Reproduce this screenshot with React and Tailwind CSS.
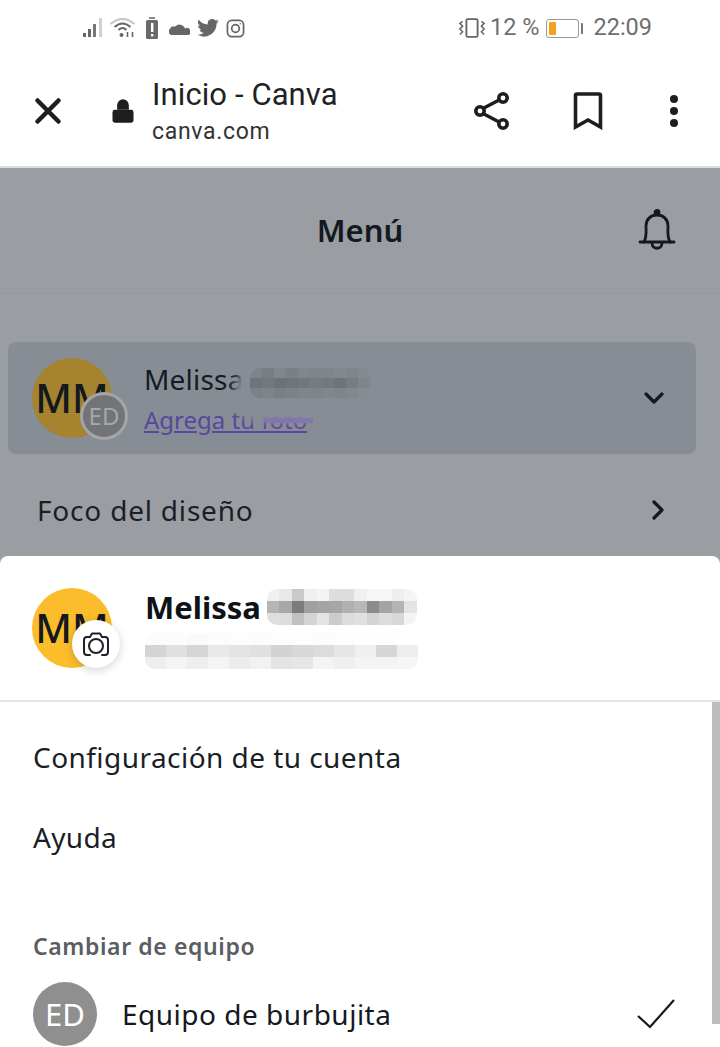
import React from 'react';
import { X, Lock, ChevronDown, ChevronRight } from 'lucide-react';

// pixelated patches that hide the surname and email
const nameCells = [
  ['#f0f0f0', '#e8e8e8', '#c9c9c9', '#f0f0f0', '#f4f4f4', '#dddddd', '#dddddd', '#f0f0f0', '#f6f6f6', '#f6f6f6', '#eeeeee', '#f4f4f4'],
  ['#b5b5b5', '#a8a8a8', '#7c7c7c', '#a0a0a0', '#a4a4a4', '#a6a6a6', '#b0b0b0', '#b8b8b8', '#8c8c8c', '#a4a4a4', '#b4b4b4', '#e4e4e4'],
  ['#dedede', '#dcdcdc', '#c0c0c0', '#d4d4d4', '#e4e4e4', '#cccccc', '#dcdcdc', '#e0e0e0', '#d4d4d4', '#dcdcdc', '#d8d8d8', '#f4f4f4'],
];
const mailCells = [
  ['#fcfcfc', '#fcfcfc', '#fafafa', '#fcfcfc', '#fdfdfd', '#fcfcfc', '#fdfdfd', '#fdfdfd', '#fcfcfc', '#fdfdfd', '#fefefe', '#fefefe', '#ffffff'],
  ['#d2d4d6', '#dfe0e1', '#d4d5d6', '#e8e8e8', '#e4e4e4', '#e0e0e0', '#d2d4d4', '#d8d8d8', '#dcdcdc', '#e6e6e6', '#f0f0f0', '#d4d6d8', '#eeeeee'],
  ['#eeeeee', '#f4f4f4', '#eeeeee', '#f4f4f4', '#ececec', '#f2f2f2', '#e4e4e4', '#e6e6e6', '#f4f4f4', '#f0f0f0', '#f4f4f4', '#f4f4f4', '#f6f6f6'],
];
const dimCells = [
  ['#7f848b', '#787d84', '#81868d', '#7b8087', '#81868d', '#7f848b', '#80858c', '#838890', '#80858c', '#858a91'],
  ['#6f747b', '#727780', '#6d7279', '#70757c', '#72777e', '#777c83', '#74797f', '#6f747b', '#777c83', '#80858c'],
  ['#7c8188', '#7f848b', '#7a7f86', '#7d8289', '#80858c', '#7f848b', '#82878e', '#80858c', '#83888f', '#878c93'],
];

const Mosaic = ({ rows, cell = 'w-[24px] h-[12px]' }) => (
  <div className="flex flex-col blur-[0.5px] rounded-[10px] overflow-hidden">
    {rows.map((row, i) => (
      <div key={i} className="flex">
        {row.map((c, j) => (
          <div key={j} className={cell} style={{ backgroundColor: c }} />
        ))}
      </div>
    ))}
  </div>
);

const ShareIcon = () => (
  <svg width="38" height="40" viewBox="0 0 38 40" fill="none" stroke="#1e1e1e" strokeWidth="3.6">
    <path d="M9 18 L28 8 M9 22 L28 32" />
    <circle cx="7" cy="20" r="4.200" fill="#fff" />
    <circle cx="30" cy="7" r="4.200" fill="#fff" />
    <circle cx="30" cy="33" r="4.200" fill="#fff" />
  </svg>
);

const BookmarkIcon = () => (
  <svg width="30" height="38" viewBox="0 0 30 38" fill="none" stroke="#1e1e1e" strokeWidth="3.6">
    <path d="M2.500 35 V3.500 Q2.500 2 4 2 H26 Q27.500 2 27.500 3.500 V35 L15 28 Z" />
  </svg>
);

const DotsIcon = () => (
  <svg width="12" height="36" viewBox="0 0 12 36" fill="#1e1e1e">
    <circle cx="6" cy="6" r="4" />
    <circle cx="6" cy="18" r="4" />
    <circle cx="6" cy="30" r="4" />
  </svg>
);

const BellIcon = () => (
  <svg width="38" height="42" viewBox="0 0 38 42" fill="none" stroke="#14181f" strokeWidth="2.800" strokeLinecap="round" strokeLinejoin="round">
    <circle cx="19" cy="3.500" r="2" fill="#14181f" />
    <path d="M2 33 H36" />
    <path d="M6 33 C9 28 8 22 8 17 C8 10 13 6 19 6 C25 6 30 10 30 17 C30 22 29 28 32 33" />
    <path d="M14 34 C14 41 24 41 24 34" />
  </svg>
);

const CameraIcon = () => (
  <svg width="28" height="26" viewBox="0 0 28 26" fill="none" stroke="#1f2328" strokeWidth="2" strokeLinecap="round" strokeLinejoin="round">
    <path d="M8 24 H5 Q2 24 2 21 V9 Q2 6 5 6 H8 L10 2.500 H18 L20 6 H23 Q26 6 26 9 V21 Q26 24 23 24 H20" />
    <circle cx="14" cy="15" r="7" />
  </svg>
);

const CheckIcon = () => (
  <svg width="38" height="30" viewBox="0 0 38 30" fill="none" stroke="#14181f" strokeWidth="2.200">
    <path d="M1 17 L13 28 L37 1" />
  </svg>
);

const StatusIcons = () => (
  <div className="flex items-center">
    {/* signal */}
    <svg width="22" height="22" viewBox="0 0 22 22">
      <rect x="1" y="16" width="3" height="4" fill="#666" />
      <rect x="6" y="12" width="3" height="8" fill="#666" />
      <rect x="11" y="7" width="3" height="13" fill="#777" />
      <rect x="17" y="1" width="3" height="19" fill="#d0d0d0" />
    </svg>
    {/* wifi */}
    <svg width="27" height="22" viewBox="0 0 26 22" fill="none" stroke="#666" strokeWidth="2" className="ml-[5px]">
      <path d="M1 7 Q13 -3 25 7" stroke="#c4c4c4" />
      <path d="M5 10 Q13 3 21 10" />
      <path d="M9 13 Q13 9 17 13" />
      <circle cx="12" cy="18" r="2" fill="#666" stroke="none" />
      <path d="M18 15 v5 M23 15 v5" strokeWidth="1.600" />
    </svg>
    {/* battery alert */}
    <svg width="14" height="22" viewBox="0 0 14 22" className="ml-[9px]">
      <rect x="4" y="0" width="6" height="2" fill="#888" />
      <rect x="1" y="3" width="12" height="19" rx="1.500" fill="#6a6a6a" />
      <rect x="6" y="6" width="2.400" height="9" fill="#fff" />
      <rect x="6" y="17" width="2.400" height="2.400" fill="#fff" />
    </svg>
    {/* cloud */}
    <svg width="21" height="13" viewBox="0 0 22 14" className="ml-[10px]">
      <path d="M2 14 a4 4 0 0 1 -1 -7 a4 4 0 0 1 5 -2 a6.500 6.500 0 0 1 11 2 a3.800 3.800 0 0 1 4 7 z" fill="#666" />
    </svg>
    {/* twitter */}
    <svg width="22" height="18" viewBox="0 0 24 20" className="ml-[7px]">
      <path d="M24 2.400a9.800 9.800 0 0 1-2.800.8A4.900 4.900 0 0 0 23.300.5a9.800 9.800 0 0 1-3.100 1.200 4.900 4.900 0 0 0-8.400 4.500A14 14 0 0 1 1.700.9a4.900 4.900 0 0 0 1.500 6.600 4.900 4.900 0 0 1-2.200-.6 4.900 4.900 0 0 0 3.900 4.900 4.900 4.900 0 0 1-2.200.1 4.900 4.900 0 0 0 4.600 3.400A9.900 9.900 0 0 1 0 17.300 14 14 0 0 0 21.500 4.900 10 10 0 0 0 24 2.400z" fill="#666" />
    </svg>
    {/* instagram */}
    <svg width="19" height="19" viewBox="0 0 20 20" fill="none" stroke="#666" strokeWidth="1.800" className="ml-[7px]">
      <rect x="1.500" y="1.500" width="17" height="17" rx="4.500" />
      <circle cx="10" cy="10" r="4" />
      <circle cx="15" cy="5" r="0.8" fill="#666" stroke="none" />
    </svg>
  </div>
);

const VibrateIcon = () => (
  <svg width="28" height="22" viewBox="0 0 30 22" fill="none" stroke="#666" strokeWidth="1.600">
    <rect x="9" y="1.500" width="12" height="19" rx="1.500" strokeWidth="2" />
    <path d="M5 4 L2 6 L5 9 L2 12 L5 15 L2 18" />
    <path d="M25 4 L28 6 L25 9 L28 12 L25 15 L28 18" />
  </svg>
);

const BatteryIcon = () => (
  <div className="flex items-center gap-[2px]">
    <div className="w-[33px] h-[19px] rounded-[3px] border border-[#9a9a9a] p-[2px] bg-white">
      <div className="w-[7px] h-full bg-[#f5a11c] rounded-[1px]" />
    </div>
    <div className="w-[2px] h-[11px] bg-[#777] rounded-r-[1px]" />
  </div>
);

export default function App() {
  return (
    <div className="w-[720px] h-[1047px] overflow-hidden flex flex-col bg-[#9a9ea3] font-['Noto_Sans',sans-serif]">
      {/* browser chrome */}
      <div className="h-[168px] shrink-0 bg-white border-b-2 border-[#dcdcdc] flex flex-col font-['Roboto',sans-serif]">
        <div className="h-[56px] shrink-0 flex items-center pl-[82px] pr-[68px] justify-between">
          <StatusIcons />
          <div className="flex items-center text-[23.500px] text-[#6e6e6e] leading-none">
            <VibrateIcon />
            <span className="ml-[4px] mr-[7px]">12 %</span>
            <BatteryIcon />
            <span className="ml-[10px]">22:09</span>
          </div>
        </div>
        <div className="flex items-center flex-1 pl-[27px] pr-[40px]">
          <X size={42} strokeWidth={2.600} color="#1e1e1e" />
          <Lock size={28} strokeWidth={0} fill="#1e1e1e" className="ml-[40px]" />
          <div className="ml-[15px] flex flex-col pt-[3px]">
            <span className="text-[31px] leading-[38px] text-[#222] tracking-[0.1px]">Inicio - Canva</span>
            <span className="mt-[1px] text-[23px] leading-[34px] text-[#333] tracking-[0.7px]">canva.com</span>
          </div>
          <div className="ml-auto flex items-center">
            <ShareIcon />
            <div className="ml-[62px]"><BookmarkIcon /></div>
            <div className="ml-[65px]"><DotsIcon /></div>
          </div>
        </div>
      </div>

      {/* dimmed menu page */}
      <div className="h-[388px] shrink-0 flex flex-col">
        <div className="h-[126px] shrink-0 flex items-center justify-center relative border-b border-[#95999e]">
          <span className="text-[31px] font-semibold text-[#14181f]">Menú</span>
          <div className="absolute right-[44px] top-[41px]"><BellIcon /></div>
        </div>
        <div className="mt-[48px] ml-[8px] mr-[24px] h-[112px] shrink-0 rounded-[8px] bg-[#878d95] flex items-center pl-[24px] pr-[26px] relative">
          <div className="relative w-[80px] h-[80px] shrink-0 rounded-full bg-[#a5832f] flex items-center justify-center">
            <span className="text-[40px] font-medium text-[#14181f] leading-none">MM</span>
            <div className="absolute left-[48px] top-[34px] w-[48px] h-[48px] rounded-full bg-[#727477] border-[3px] border-[#a3a5a8] flex items-center justify-center text-[24px] text-[#a5a7aa]">
              ED
            </div>
          </div>
          <div className="ml-[32px] flex flex-col gap-[6px]">
            <span className="text-[28px] leading-[38px] text-[#161b22] tracking-[0.2px]">Melissa</span>
            <span className="text-[24px] leading-[32px] text-[#5a45a0] underline">Agrega tu foto</span>
          </div>
          <ChevronDown size={32} strokeWidth={2.400} color="#14181f" className="ml-auto" />
          {/* censor patch over the surname */}
          <div className="absolute left-[226px] top-[24px] w-[156px] h-[56px] rounded-[24px] bg-[#878d95] blur-[4px]" />
          <div className="absolute left-[242px] top-[26px]">
            <Mosaic rows={dimCells} cell="w-[12px] h-[10px]" />
          </div>
          <div className="absolute left-[257px] top-[76px] w-[48px] h-[5px] bg-[#8276ad]" />
        </div>
        <div className="mt-[32px] flex items-center justify-between pl-[37px] pr-[46px]">
          <span className="text-[28px] leading-[48px] text-[#1a1e25] tracking-[0.8px]">Foco del diseño</span>
          <ChevronRight size={32} strokeWidth={2.400} color="#14181f" />
        </div>
      </div>

      {/* account sheet */}
      <div className="flex-1 bg-white rounded-t-[8px] flex flex-col">
        <div className="h-[146px] shrink-0 border-b-2 border-[#e4e6e8] flex items-center pl-[32px]">
          <div className="relative w-[80px] h-[80px] shrink-0 rounded-full bg-[#fbbd2c] flex items-center justify-center">
            <span className="text-[40px] font-medium text-[#14181f] leading-none">MM</span>
            <div className="absolute left-[40px] top-[32px] w-[48px] h-[48px] rounded-full bg-white shadow-[0_2px_10px_rgba(0,0,0,0.18)] flex items-center justify-center">
              <CameraIcon />
            </div>
          </div>
          <div className="ml-[33px] flex flex-col">
            <div className="flex items-center gap-[6px]">
              <span className="text-[31px] leading-[40px] font-bold text-[#0e1318]">Melissa</span>
              <Mosaic rows={nameCells} cell="w-[12.500px] h-[12px]" />
            </div>
            <div className="mt-[6px]">
              <Mosaic rows={mailCells} cell="w-[21px] h-[12px]" />
            </div>
          </div>
        </div>
        <div className="flex-1 flex">
          <div className="flex-1 flex flex-col pl-[33px] pr-[37px] pt-[34px]">
            <span className="text-[28px] leading-[42px] text-[#1a1e25] tracking-[0.45px]">Configuración de tu cuenta</span>
            <span className="mt-[38px] text-[28px] leading-[42px] text-[#1a1e25] tracking-[0.3px]">Ayuda</span>
            <span className="mt-[72px] text-[23px] leading-[32px] font-semibold text-[#5a5d62] tracking-[0.6px]">Cambiar de equipo</span>
            <div className="mt-[20px] flex items-center">
              <div className="w-[64px] h-[64px] shrink-0 rounded-full bg-[#8f8f8f] flex items-center justify-center text-white text-[31px]">ED</div>
              <span className="ml-[25px] text-[28px] text-[#14181f] tracking-[0.5px]">Equipo de burbujita</span>
              <div className="ml-auto"><CheckIcon /></div>
            </div>
          </div>
          <div className="w-[8px] h-[322px] bg-[#bdbdbd]" />
        </div>
      </div>
    </div>
  );
}
